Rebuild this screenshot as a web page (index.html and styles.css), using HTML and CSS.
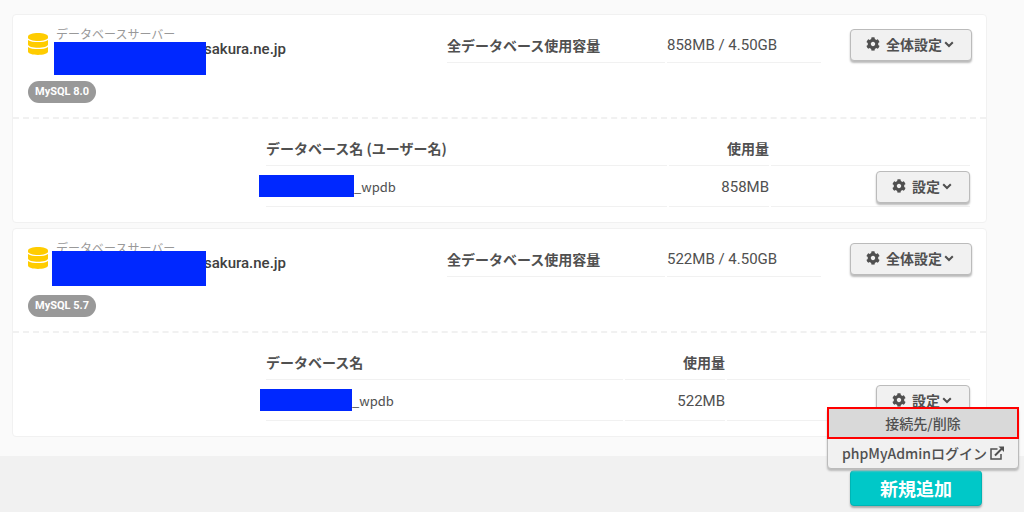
FILE: index.html
```html
<!DOCTYPE html>
<html lang="ja">
<head>
<meta charset="utf-8">
<title>データベース</title>
<link rel="stylesheet" href="styles.css">
</head>
<body>
<svg class="defs" aria-hidden="true">
  <symbol id="db" viewBox="0 0 20 22"><path d="M10 0C15 0 20 1.300 20 3.400V4.800C20 6.700 15 8 10 8S0 6.700 0 4.800V3.400C0 1.300 5 0 10 0Z"/><path d="M0 7C2 8.600 6 9.100 10 9.100S18 8.600 20 7V11.500C20 13.500 15 14.800 10 14.800S0 13.500 0 11.500Z"/><path d="M0 14C2 15.600 6 16.100 10 16.100S18 15.600 20 14V18.600C20 20.700 15 22 10 22S0 20.700 0 18.600Z"/></symbol>
  <symbol id="gear" viewBox="0 0 512 512"><path d="M487.400 315.700l-42.600-24.600c4.300-23.200 4.300-47 0-70.200l42.600-24.600c4.900-2.800 7.100-8.600 5.500-14-11.100-35.600-30-67.800-54.700-94.600-3.800-4.100-10-5.100-14.800-2.300L380.800 110c-17.900-15.400-38.500-27.300-60.800-35.100V25.800c0-5.600-3.900-10.500-9.400-11.700-36.700-8.200-74.300-7.800-109.200 0-5.500 1.200-9.400 6.100-9.400 11.700V75c-22.200 7.900-42.800 19.800-60.800 35.100L88.700 85.500c-4.900-2.800-11-1.900-14.800 2.300-24.700 26.700-43.600 58.900-54.700 94.600-1.700 5.400.6 11.200 5.500 14L67.300 221c-4.300 23.200-4.300 47 0 70.200l-42.600 24.600c-4.900 2.800-7.100 8.600-5.500 14 11.100 35.600 30 67.800 54.700 94.600 3.800 4.100 10 5.100 14.800 2.300l42.600-24.600c17.900 15.400 38.500 27.300 60.800 35.100v49.200c0 5.600 3.900 10.500 9.400 11.700 36.700 8.200 74.300 7.800 109.200 0 5.500-1.200 9.400-6.100 9.400-11.700v-49.200c22.200-7.900 42.800-19.800 60.800-35.100l42.600 24.600c4.900 2.800 11 1.900 14.800-2.300 24.700-26.700 43.600-58.900 54.700-94.600 1.500-5.500-.7-11.300-5.600-14.100zM256 336c-44.100 0-80-35.900-80-80s35.900-80 80-80 80 35.900 80 80-35.900 80-80 80z"/></symbol>
  <symbol id="chev" viewBox="0 0 10 7"><path d="M1.200 1.200L5 5L8.800 1.200" fill="none" stroke="currentColor" stroke-width="2"/></symbol>
  <symbol id="ext" viewBox="0 0 14 14"><path d="M7.500 3H1V13H11V8" fill="none" stroke="currentColor" stroke-width="1.500"/><path d="M5 9.500L12 2.500" fill="none" stroke="currentColor" stroke-width="2"/><path d="M8.500 0.500H14V6Z"/></symbol>
</svg>
<main class="content">
  <section class="card">
    <header class="card-head">
      <div class="server">
        <svg class="db-icon"><use href="#db"/></svg>
        <div class="server-text">
          <p class="label">データベースサーバー</p>
          <p class="host">sakura.ne.jp</p>
          <span class="mask mask-host"></span>
        </div>
        <span class="badge">MySQL 8.0</span>
      </div>
      <dl class="capacity"><dt>全データベース使用容量</dt><dd>858MB / 4.50GB</dd></dl>
      <button class="btn btn-all" type="button"><svg class="gear"><use href="#gear"/></svg>全体設定<svg class="chev"><use href="#chev"/></svg></button>
    </header>
    <div class="card-body">
      <table class="dbs">
        <colgroup><col><col class="col-use"><col class="col-action"></colgroup>
        <thead><tr><th scope="col">データベース名 (ユーザー名)</th><th scope="col" class="num">使用量</th><td></td></tr></thead>
        <tbody><tr><td class="name"><span class="mask mask-name"></span>_wpdb</td><td class="num">858MB</td><td class="action"><button class="btn" type="button"><svg class="gear"><use href="#gear"/></svg>設定<svg class="chev"><use href="#chev"/></svg></button></td></tr></tbody>
      </table>
    </div>
  </section>
  <section class="card">
    <header class="card-head">
      <div class="server">
        <svg class="db-icon"><use href="#db"/></svg>
        <div class="server-text">
          <p class="label">データベースサーバー</p>
          <p class="host">sakura.ne.jp</p>
          <span class="mask mask-host mask-high"></span>
        </div>
        <span class="badge">MySQL 5.7</span>
      </div>
      <dl class="capacity"><dt>全データベース使用容量</dt><dd>522MB / 4.50GB</dd></dl>
      <button class="btn btn-all" type="button"><svg class="gear"><use href="#gear"/></svg>全体設定<svg class="chev"><use href="#chev"/></svg></button>
    </header>
    <div class="card-body">
      <table class="dbs dbs-wide">
        <colgroup><col><col class="col-use"><col class="col-action"></colgroup>
        <thead><tr><th scope="col">データベース名</th><th scope="col" class="num">使用量</th><td></td></tr></thead>
        <tbody><tr><td class="name"><span class="mask mask-name mask-short"></span>_wpdb</td><td class="num">522MB</td><td class="action"><div class="dropdown"><button class="btn" type="button" aria-expanded="true"><svg class="gear"><use href="#gear"/></svg>設定<svg class="chev"><use href="#chev"/></svg></button>
          <div class="menu">
            <button class="menu-item active" type="button">接続先/削除</button>
            <a class="menu-item" href="#">phpMyAdminログイン<svg class="ext"><use href="#ext"/></svg></a>
          </div></div></td></tr></tbody>
      </table>
    </div>
  </section>
</main>
<footer class="actions"><button class="add" type="button">新規追加</button></footer>
</body>
</html>
```
FILE: styles.css
```css
* { box-sizing: border-box; }
body {
  margin: 0;
  min-height: 100vh;
  display: flex;
  flex-direction: column;
  background: #fafafa;
  color: #505050;
  font: 14px/20px "Noto Sans CJK JP", "Noto Sans", sans-serif;
}
p, dl, dd { margin: 0; }
svg { fill: currentColor; flex: none; }
.defs { position: absolute; width: 0; height: 0; }
.content {
  display: flex;
  flex-direction: column;
  gap: 5px;
  padding: 14px 37px 19px 12px;
}
.card { background: #fff; border: 1px solid #f1f1f1; border-radius: 4px; }
.card-head {
  display: grid;
  grid-template-columns: 1fr 374px 122px;
  column-gap: 29px;
  align-items: start;
  min-height: 104px;
  padding: 11px 14px 0;
  border-bottom: 2px dashed #f1f1f1;
}
.server {
  display: grid;
  grid-template-columns: 21px 1fr;
  column-gap: 8px;
  justify-items: start;
}
.db-icon { width: 20px; height: 22px; margin: 7px 0 0 1px; color: #fc0; }
.server-text { position: relative; align-self: start; }
.label { color: #999; font-size: 12px; line-height: 16px; }
.host {
  padding-left: 148px;
  color: #404040;
  font: 500 15px/14px Roboto, "Noto Sans CJK JP", sans-serif;
}
.mask { background: #0028ff; }
.mask-host { position: absolute; left: -2px; top: 16px; width: 152px; height: 33px; }
.mask-high { left: -4px; top: 11px; width: 154px; height: 35px; }
.badge {
  grid-column: 1 / -1;
  margin: 25px 0 0 1px;
  padding: 0 7px;
  border-radius: 11px;
  background: #999;
  color: #fff;
  font: 700 11px/22px Roboto, "Noto Sans CJK JP", sans-serif;
}
.capacity { display: grid; grid-template-columns: 218px 1fr; column-gap: 2px; }
.capacity dt, .capacity dd { padding: 9px 0 7px; border-bottom: 1px solid #f1f1f1; }
.capacity dt, th { font-weight: 700; }
.capacity dd, .dbs td.num { font-family: Roboto, "Noto Sans CJK JP", sans-serif; font-size: 15px; }
.btn {
  display: inline-flex;
  align-items: center;
  justify-content: center;
  width: 94px;
  height: 32px;
  padding: 0 2px 2px 0;
  border: 1px solid #bbb;
  border-radius: 4px;
  background: #f1f1f1;
  box-shadow: 0 2px 2px #bbb;
  color: #505050;
  font: 700 14px/20px "Noto Sans CJK JP", sans-serif;
}
.btn-all { width: 122px; margin-top: 3px; }
.gear { width: 14px; height: 14px; margin-right: 6px; }
.chev { width: 10px; height: 7px; margin-left: 2px; }
.card-body { padding: 15px 14px 15px 251px; }
.dbs { width: 100%; border-spacing: 2px 0; table-layout: fixed; }
.col-use { width: 100px; }
.col-action { width: 199px; }
.dbs-wide .col-action { width: 243px; }
.dbs th, .dbs thead td { padding: 4px 0 7px; border-bottom: 1px solid #f1f1f1; text-align: left; }
.dbs tbody td { height: 41px; padding: 2px 0 0; border-bottom: 1px solid #f1f1f1; }
.dbs tbody .name { padding: 0; font-size: 13px; }
.dbs .num { text-align: right; }
.dbs .action { text-align: right; }
.action .btn { vertical-align: middle; }
.mask-name { display: inline-block; width: 95px; height: 22px; margin-left: -7px; vertical-align: bottom; }
.mask-short { width: 92px; margin-left: -6px; }
.dropdown { position: relative; display: inline-block; vertical-align: middle; }
.menu {
  position: absolute;
  z-index: 1;
  top: 22px;
  right: -49px;
  width: 192px;
  border: 1px solid #bbb;
  border-radius: 4px;
  background: #f1f1f1;
  box-shadow: 0 2px 2px #bbb;
}
.menu-item {
  display: flex;
  align-items: center;
  justify-content: center;
  width: 100%;
  height: 30px;
  padding: 0;
  border: 0;
  background: none;
  color: #505050;
  font: 500 14px/20px "Noto Sans CJK JP", sans-serif;
  text-decoration: none;
  white-space: nowrap;
}
.menu-item.active { background: #d9d9d9; outline: 2px solid #f00; outline-offset: -1px; }
.ext { width: 14px; height: 14px; margin-left: 3px; }
.actions {
  flex: 1;
  display: flex;
  justify-content: flex-end;
  align-items: flex-start;
  padding: 14px 42px 5px;
  background: #f1f1f1;
}
.add {
  width: 132px;
  height: 36px;
  padding: 0;
  border: 1px solid #00b4b4;
  border-radius: 4px;
  background: #00c8c8;
  box-shadow: 0 2px 2px #aaa;
  color: #fff;
  font: 700 18px/24px "Noto Sans CJK JP", sans-serif;
}
```
